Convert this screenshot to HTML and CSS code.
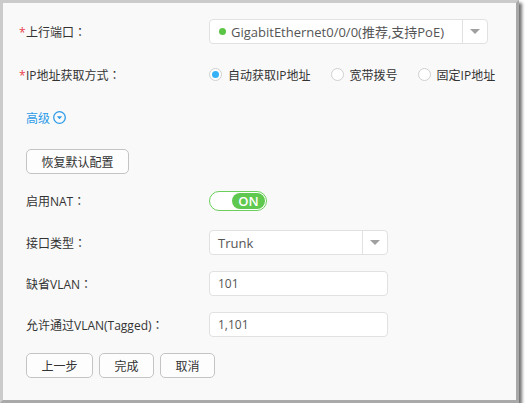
FILE: index.html
```html
<!DOCTYPE html>
<html>
<head>
<meta charset="utf-8">
<link rel="stylesheet" href="styles.css">
</head>
<body>
<div class="window">
  <div class="form">
    <div class="row r-port">
      <div class="lbl"><span class="star">*</span>上行端口<span class="colon">：</span></div>
      <div class="select sel-port">
        <div class="sel-text"><span class="dot"></span>GigabitEthernet0/0/0(推荐,支持PoE)</div>
        <div class="sel-arrow"><span class="tri"></span></div>
      </div>
    </div>
    <div class="row r-ip">
      <div class="lbl"><span class="star">*</span>IP地址获取方式<span class="colon">：</span></div>
      <div class="radios">
        <span class="radio on"></span><span class="rtxt">自动获取IP地址</span>
        <span class="radio"></span><span class="rtxt">宽带拨号</span>
        <span class="radio"></span><span class="rtxt">固定IP地址</span>
      </div>
    </div>
    <div class="row r-adv">
      <span class="adv">高级</span>
      <svg class="adv-ico" width="13" height="13" viewBox="0 0 13 13"><circle cx="6.5" cy="6.5" r="5.8" fill="none" stroke="#2d9be8" stroke-width="1.3"/><path d="M3.8 5.2 L9.2 5.2 L6.5 8.3 Z" fill="#2d9be8"/></svg>
    </div>
    <div class="row r-reset">
      <button class="btn btn-reset">恢复默认配置</button>
    </div>
    <div class="row r-nat">
      <div class="lbl">启用NAT<span class="colon">：</span></div>
      <div class="toggle"><span class="knob">ON</span></div>
    </div>
    <div class="row r-type">
      <div class="lbl">接口类型<span class="colon">：</span></div>
      <div class="select sel-type">
        <div class="sel-text">Trunk</div>
        <div class="sel-arrow"><span class="tri"></span></div>
      </div>
    </div>
    <div class="row r-vlan">
      <div class="lbl">缺省VLAN<span class="colon">：</span></div>
      <div class="input">101</div>
    </div>
    <div class="row r-tag">
      <div class="lbl">允许通过VLAN(Tagged)<span class="colon">：</span></div>
      <div class="input">1,101</div>
    </div>
    <div class="row r-btns">
      <button class="btn btn-prev">上一步</button>
      <button class="btn btn-sm">完成</button>
      <button class="btn btn-sm">取消</button>
    </div>
  </div>
</div>
</body>
</html>
```
FILE: styles.css
```css
* { box-sizing: border-box; }
html, body { margin: 0; padding: 0; background: #ffffff; }
body {
  font-family: "Open Sans", "Noto Sans CJK SC", sans-serif;
  font-size: 12px;
  color: #333;
}
.window {
  width: 519px;
  height: 403px;
  background: #f9f9f9;
  border: 3px solid #cbcbcb;
  border-right-color: #a9a9a9;
  border-bottom-color: #a9a9a9;
  box-shadow: 3px 3px 3px rgba(0,0,0,0.55);
}
.form {
  padding: 16px 0 0 23px;
  display: flex;
  flex-direction: column;
}
.row {
  display: flex;
  align-items: center;
  height: 25px;
}
.r-ip { margin-top: 18px; }
.r-adv { margin-top: 18px; }
.r-reset { margin-top: 19px; }
.r-nat { margin-top: 14px; }
.r-type { margin-top: 17px; }
.r-vlan, .r-tag, .r-btns { margin-top: 16px; }

.lbl {
  width: 183px;
  flex: none;
  color: #333;
  white-space: nowrap;
}
.colon { font-family: "Noto Sans CJK TC", sans-serif; }
.star {
  display: inline-block;
  width: 7px;
  margin-left: -7px;
  color: #e8434a;
}
.select {
  display: flex;
  height: 25px;
  background: #fff;
  border: 1px solid #e1e1e1;
  border-radius: 4px;
}
.sel-port { width: 279px; }
.sel-type { width: 179px; }
.sel-text {
  flex: 1;
  display: flex;
  align-items: center;
  padding-left: 8px;
  color: #555;
  font-size: 13px;
  white-space: nowrap;
}
.dot {
  width: 7px;
  height: 7px;
  border-radius: 50%;
  background: #5cc545;
  margin: 0 5px 0 1px;
}
.sel-arrow {
  width: 25px;
  flex: none;
  border-left: 1px solid #e1e1e1;
  display: flex;
  align-items: center;
  justify-content: center;
}
.tri {
  width: 0; height: 0;
  border-left: 5px solid transparent;
  border-right: 5px solid transparent;
  border-top: 5px solid #a0a0a0;
}
.radios {
  display: flex;
  align-items: center;
}
.radio {
  width: 13px;
  height: 13px;
  border-radius: 50%;
  border: 1px solid #cfcfcf;
  background: #fff;
  display: flex;
  align-items: center;
  justify-content: center;
  margin-right: 6px;
}
.radio.on::after {
  content: "";
  width: 7px;
  height: 7px;
  border-radius: 50%;
  background: #37b1f5;
}
.rtxt { margin-right: 20px; color: #333; }
.adv { color: #2d9be8; font-size: 12px; }
.adv-ico { margin-left: 3px; }
.btn {
  font-family: "Open Sans", "Noto Sans CJK SC", sans-serif;
  font-size: 12px;
  color: #333;
  height: 25px;
  background: #fdfdfd;
  border: 1px solid #c4c4c4;
  border-radius: 5px;
  padding: 0;
}
.btn-reset { width: 103px; }
.btn-prev { width: 67px; margin-right: 6px; }
.btn-sm { width: 55px; margin-right: 6px; }
.toggle {
  width: 58px;
  height: 20px;
  border: 1px solid #6ccf5c;
  border-radius: 10px;
  background: #fff;
  padding: 1px;
  display: flex;
  justify-content: flex-end;
}
.knob {
  width: 33px;
  height: 16px;
  border-radius: 8px;
  background: #5fc84e;
  color: #fff;
  font-size: 13px;
  font-weight: 600;
  display: flex;
  align-items: center;
  justify-content: center;
}
.input {
  width: 179px;
  height: 25px;
  background: #fff;
  border: 1px solid #e1e1e1;
  border-radius: 4px;
  padding-left: 8px;
  display: flex;
  align-items: center;
  color: #555;
  font-size: 12px;
}
```
